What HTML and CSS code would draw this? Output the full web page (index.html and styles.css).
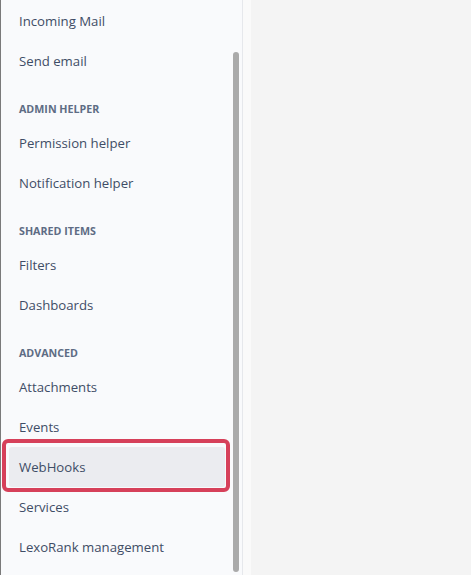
FILE: index.html
```html
<!DOCTYPE html>
<html lang="en">
<head>
  <meta charset="UTF-8" />
  <title>Admin sidebar</title>
  <link rel="stylesheet" href="styles.css">
</head>
<body>
  <div class="page">
    <nav class="sidebar">
      <div class="nav-scroll">
        <a class="nav-item">Incoming Mail</a>
        <a class="nav-item">Send email</a>

        <div class="nav-heading">ADMIN HELPER</div>
        <a class="nav-item">Permission helper</a>
        <a class="nav-item">Notification helper</a>

        <div class="nav-heading">SHARED ITEMS</div>
        <a class="nav-item">Filters</a>
        <a class="nav-item">Dashboards</a>

        <div class="nav-heading">ADVANCED</div>
        <a class="nav-item">Attachments</a>
        <a class="nav-item">Events</a>
        <a class="nav-item selected">WebHooks<span class="highlight"></span></a>
        <a class="nav-item">Services</a>
        <a class="nav-item">LexoRank management</a>
      </div>
      <div class="scrollbar"><div class="thumb"></div></div>
    </nav>
    <div class="gutter"></div>
    <main class="content"></main>
  </div>
</body>
</html>
```

FILE: styles.css
```css
html, body {
  margin: 0;
  height: 100%;
}
body {
  font-family: 'Open Sans', 'Noto Sans', sans-serif;
  background: #f4f4f4;
  color: #3f4d66;
  overflow: hidden;
}
.page {
  display: flex;
  height: 575px;
}
.sidebar {
  width: 241px;
  background: #f9fafc;
  border-left: 1px solid #7a7a7a;
  border-right: 1px solid #e6e8ec;
  display: flex;
}
.nav-scroll {
  flex: 1;
  display: flex;
  flex-direction: column;
  margin-top: 1px;
}
.nav-item {
  position: relative;
  display: flex;
  align-items: center;
  height: 40px;
  margin: 0 8px;
  padding: 0 10px;
  font-size: 13.2px;
  border-radius: 3px;
  cursor: pointer;
}
.nav-item.selected {
  background: #ebecf0;
}
.highlight {
  position: absolute;
  left: -7px;
  right: -5px;
  top: -8px;
  bottom: -5px;
  border: 4px solid #d6405a;
  border-radius: 6px;
}
.nav-heading {
  height: 42px;
  padding: 0 18px;
  box-sizing: border-box;
  padding-top: 21px;
  font-size: 10.7px;
  font-weight: 700;
  color: #5e6c84;
}
.scrollbar {
  width: 9px;
  padding-top: 52px;
  padding-bottom: 3px;
  display: flex;
  flex-direction: column;
}
.thumb {
  flex: 1;
  width: 6px;
  background: #aaaaaa;
  border-radius: 3px;
}
.gutter {
  width: 8px;
  background: #fafafa;
}
.content {
  flex: 1;
}
```
